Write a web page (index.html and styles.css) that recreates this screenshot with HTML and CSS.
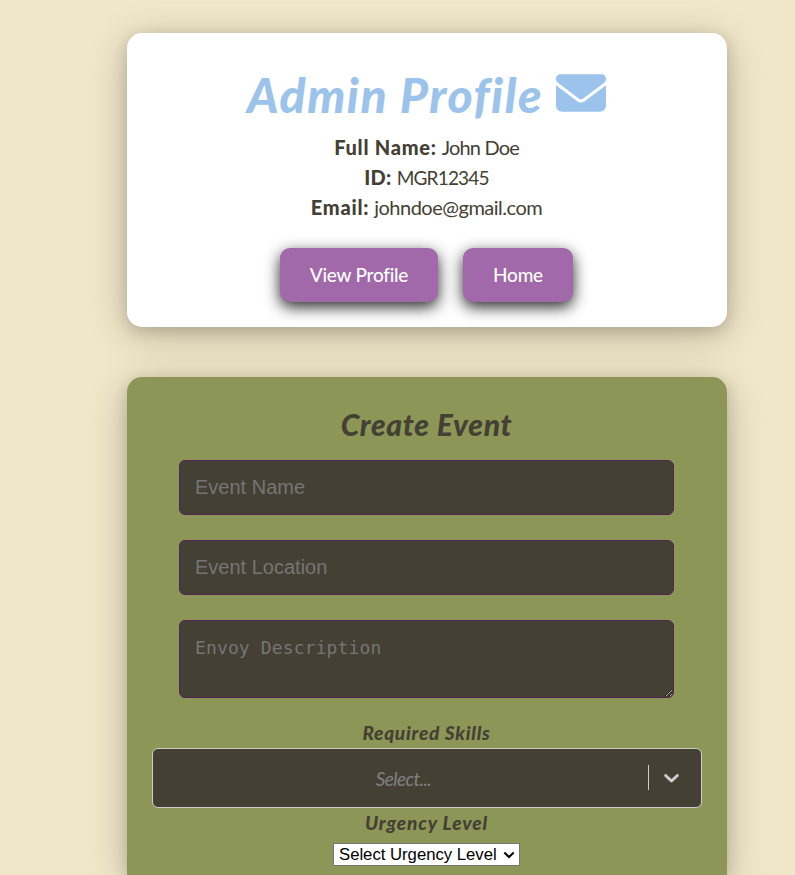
FILE: index.html
```html
<!DOCTYPE html>
<html lang="en">
<head>
<meta charset="utf-8">
<title>Admin Profile</title>
<link rel="stylesheet" href="styles.css">
</head>
<body>
<main class="page">
  <section class="card profile">
    <h1 class="title"><span class="title-text">Admin Profile</span>
      <svg class="envelope" viewBox="0 0 512 384" aria-hidden="true"><path fill="currentColor" d="M48 0C21.500 0 0 21.500 0 48c0 15.100 7.100 29.300 19.200 38.400l217.600 163.200c11.400 8.500 27 8.500 38.400 0L492.800 86.400C504.900 77.300 512 63.100 512 48c0-26.500-21.500-48-48-48H48zM0 112v208c0 35.300 28.700 64 64 64h384c35.300 0 64-28.700 64-64V112L294.400 275.200c-22.800 17.100-54 17.100-76.800 0L0 112z"/></svg>
    </h1>
    <p class="info"><strong class="info-label">Full Name:</strong><span class="name">John Doe</span></p>
    <p class="info"><strong>ID:</strong><span class="id">MGR12345</span></p>
    <p class="info"><strong class="info-label">Email:</strong><span class="email">johndoe@gmail.com</span></p>
    <div class="actions">
      <button class="btn btn-view">View Profile</button>
      <button class="btn btn-home">Home</button>
    </div>
  </section>
  <section class="card event">
    <h2 class="heading">Create Event</h2>
    <input class="field" type="text" placeholder="Event Name">
    <input class="field" type="text" placeholder="Event Location">
    <textarea class="field area" placeholder="Envoy Description"></textarea>
    <label class="label">Required Skills</label>
    <div class="picker">
      <span class="picker-value">Select...</span>
      <span class="divider"></span>
      <svg class="chevron" viewBox="0 0 20 20" aria-hidden="true"><path fill="currentColor" d="M4.516 7.548c0.436-0.446 1.043-0.481 1.576 0l3.908 3.747 3.908-3.747c0.533-0.481 1.141-0.446 1.574 0 0.436 0.445 0.408 1.197 0 1.615-0.406 0.418-4.695 4.502-4.695 4.502-0.217 0.223-0.502 0.335-0.787 0.335s-0.570-0.112-0.789-0.335c0 0-4.287-4.084-4.695-4.502s-0.436-1.170 0-1.615z"/></svg>
    </div>
    <label class="label urgency-label">Urgency Level</label>
    <div class="urgency-wrap">
      <select class="urgency"><option>Select Urgency Level</option></select>
      <svg class="urgency-arrow" viewBox="0 0 12 8" aria-hidden="true"><path d="M1.300 1.500 6 6l4.700-4.500" fill="none" stroke="#000" stroke-width="2"/></svg>
    </div>
  </section>
</main>
</body>
</html>
```
FILE: styles.css
```css
* { box-sizing: border-box; }
body {
  margin: 0;
  height: 875px;
  overflow: hidden;
  background: #f0e6c8;
  color: #444034;
  font-family: Lato, "Gill Sans", sans-serif;
}
.page {
  width: 600px;
  margin: 33px 0 0 127px;
  display: flex;
  flex-direction: column;
  gap: 50px;
}
.card {
  padding-right: 1px;
  border-radius: 15px;
  box-shadow: 0 4px 15px rgba(0, 0, 0, .16), 0 8px 40px rgba(0, 0, 0, .2);
  display: flex;
  flex-direction: column;
  align-items: center;
}
.profile { height: 294px; padding-top: 33px; background: #fff; }
.title {
  margin: 0;
  height: 67px;
  display: flex;
  align-items: center;
  gap: 13px;
  color: #9bc3eb;
  font-size: 48px;
  font-style: italic;
  font-weight: 900;
  line-height: 60px;
}
.title-text { margin-bottom: 9px; letter-spacing: 1.500px; }
.envelope { width: 50px; height: 38px; margin-bottom: 13px; }
.info {
  margin: 0;
  height: 30px;
  display: flex;
  gap: 5px;
  font-size: 20px;
  line-height: 29px;
  white-space: nowrap;
}
.info strong { font-weight: 900; letter-spacing: .3px; }
.info .info-label { letter-spacing: .75px; }
.name { letter-spacing: -.85px; }
.id { font-size: 19px; letter-spacing: -.8px; }
.email { letter-spacing: -.5px; }
.actions { display: flex; gap: 25px; margin-top: 25px; }
.btn {
  height: 54px;
  padding: 0 0 2px;
  border: 0;
  border-radius: 10px;
  background: #a168aa;
  box-shadow: 0 5px 15px rgba(0, 0, 0, .85);
  color: #fff;
  font: 500 19px Lato, "Gill Sans", sans-serif;
  letter-spacing: -.25px;
}
.btn-view { width: 158px; }
.btn-home { width: 110px; }
.event {
  height: 498px;
  padding-top: 29px;
  border-radius: 15px 15px 0 0;
  background: #8c9757;
}
.heading {
  margin: 0 0 18px;
  font-size: 30px;
  font-style: italic;
  font-weight: 900;
  line-height: 36px;
  letter-spacing: .7px;
}
.field {
  display: block;
  width: 495px;
  height: 55px;
  flex-shrink: 0;
  margin: 0 0 25px;
  padding: 15px;
  border: 1px solid #58205a;
  border-radius: 6px;
  background: #444034;
  color: #fff;
  font: 20px "Liberation Sans", Arial, sans-serif;
}
.field::placeholder { color: #757575; }
.area {
  height: 78px;
  margin-bottom: 23px;
  font: 18px/24px "DejaVu Sans Mono", monospace;
  letter-spacing: .13px;
}
.label {
  height: 27px;
  font-size: 19px;
  font-style: italic;
  font-weight: 900;
  line-height: 24px;
  letter-spacing: .75px;
}
.picker {
  width: 550px;
  height: 60px;
  margin-right: -1px;
  flex-shrink: 0;
  display: flex;
  align-items: center;
  border: 1px solid #ccc;
  border-radius: 6px;
  background: #444034;
  color: #ccc;
}
.picker-value {
  width: 495px;
  padding-left: 6px;
  text-align: center;
  color: #808080;
  font-size: 19px;
  font-style: italic;
  letter-spacing: -.6px;
}
.divider { width: 1px; height: 25px; margin-bottom: 2px; background: #ccc; }
.chevron { width: 25px; height: 25px; margin: 0 0 1px 10px; }
.urgency-label { margin-top: 3px; letter-spacing: .9px; }
.urgency-wrap { position: relative; display: flex; margin-top: 5px; }
.urgency {
  appearance: none;
  width: 187px;
  height: 23px;
  padding: 0 5px 1px;
  border: 1px solid #767676;
  border-radius: 0;
  background: #fff;
  color: #000;
  font: 16.700px "Liberation Sans", Arial, sans-serif;
}
.urgency-arrow {
  position: absolute;
  right: 5px;
  top: 8px;
  width: 12px;
  height: 8px;
  pointer-events: none;
}
```
